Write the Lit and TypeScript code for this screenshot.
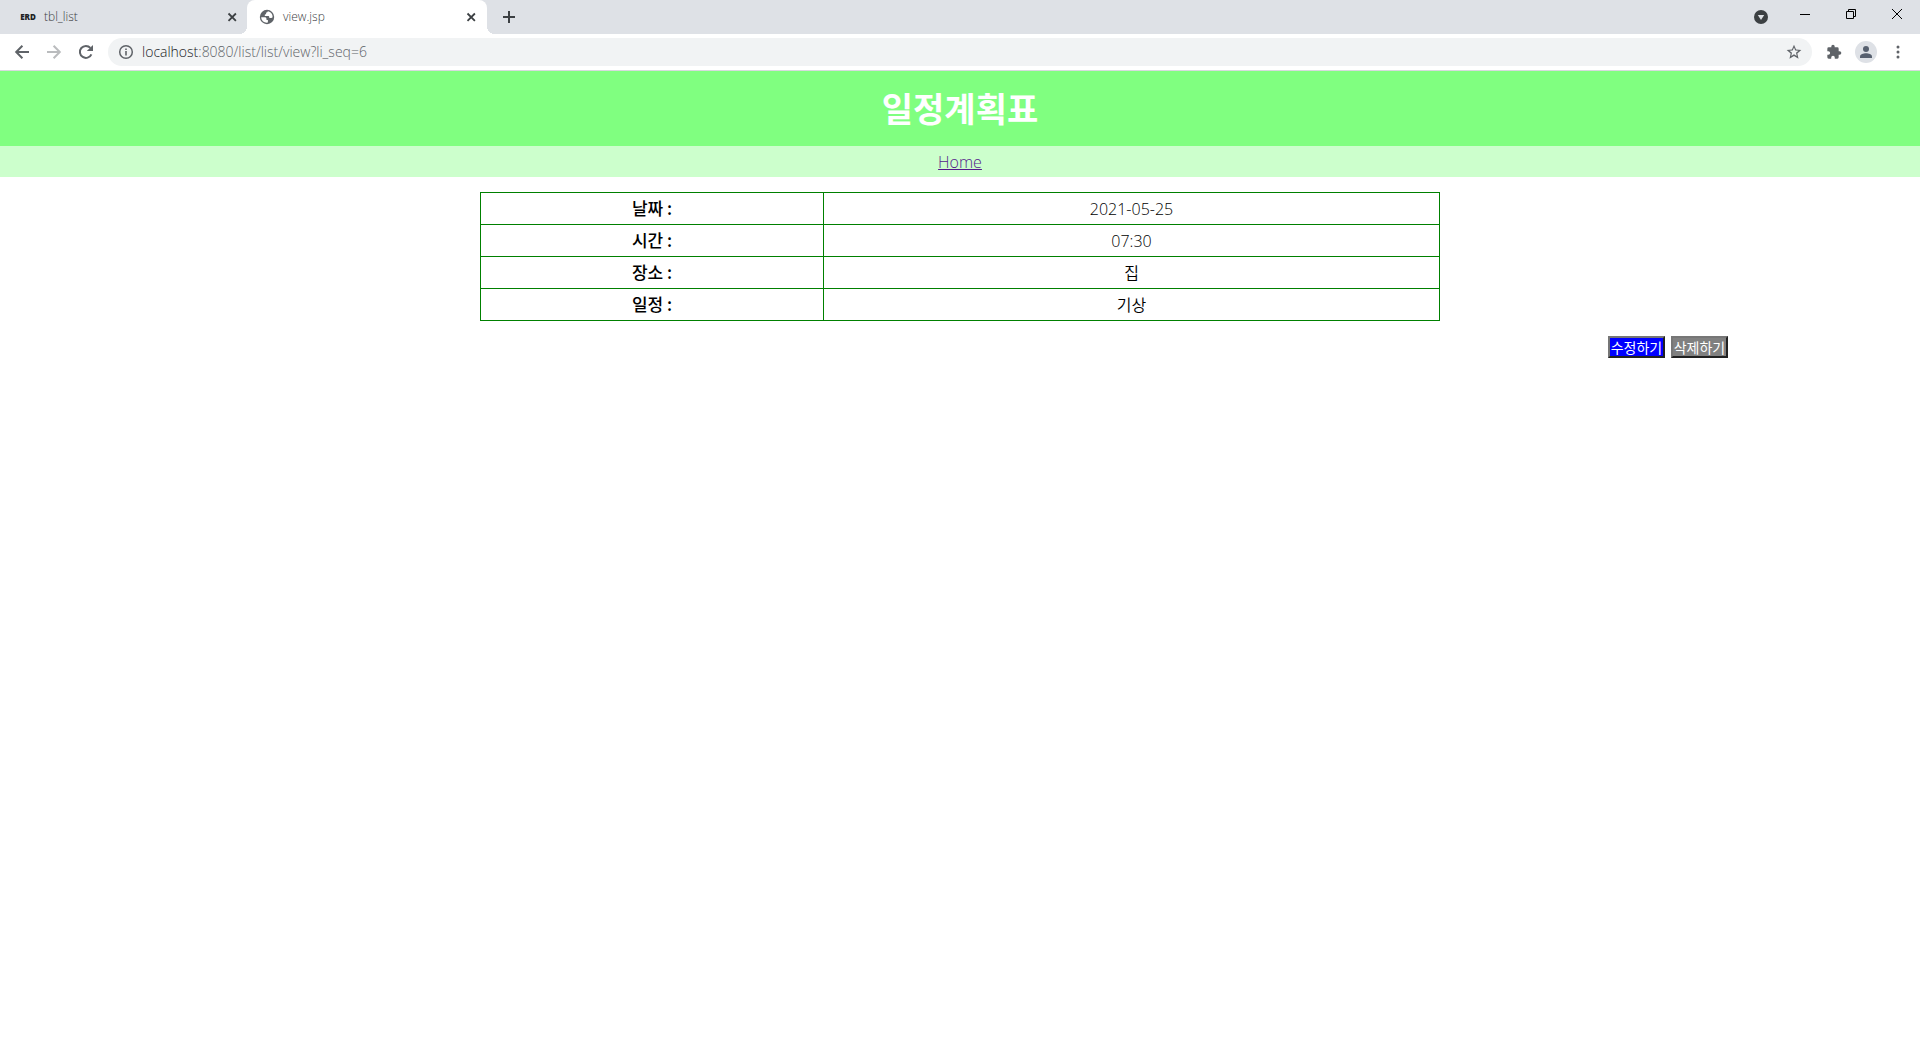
import { LitElement, html, css } from "lit";
import { customElement, property } from "lit/decorators.js";
import { classMap } from "lit/directives/class-map.js";

const closeIcon = html`<svg width="16" height="16" viewBox="0 0 16 16" fill="none" stroke="#3c4043" stroke-width="1.800"><path d="M4.500 4.500l7.400 7.400M11.900 4.500l-7.400 7.400" /></svg>`;

const globeIcon = html`<svg width="16" height="16" viewBox="0 0 16 16">
  <circle cx="8" cy="8" r="7.2" fill="#5f6368" />
  <path fill="#fff" d="M2.200 8.200h3.300c1.300 0 2 .7 2 1.700v1h1.400v2.700c-3.600.6-6.700-2-6.700-5.400zM8.800 2.300c-.1.900-.8 1.200-1.700 1.200v1.300c0 .6-.5.900-1.300.9v1.200h3.200c.8 0 1.300.5 1.300 1.300v.8h1.900c.6 0 1-.3 1.400-.8.3-3-2-5.600-4.800-5.900z" />
</svg>`;

@customElement("browser-tab")
export class BrowserTab extends LitElement {
  @property() label = "";
  @property() icon = "";
  @property({ type: Boolean }) active = false;

  static styles = css`
    :host { display: block; flex: 0 1 240px; min-width: 0; }
    .tab {
      display: flex; align-items: center; box-sizing: border-box; height: 34px;
      padding: 0 7px 0 13px; position: relative;
    }
    .active { background: #fff; border-radius: 8px 8px 0 0; padding: 0 8px 0 12px; }
    .active::before, .active::after {
      content: ""; position: absolute; bottom: 0; width: 8px; height: 8px;
    }
    .active::before { right: 100%; background: radial-gradient(circle at 0 0, transparent 8px, #fff 8px); }
    .active::after { left: 100%; background: radial-gradient(circle at 100% 0, transparent 8px, #fff 8px); }
    button { border: 0; background: none; padding: 0; margin: 0; font: inherit; color: inherit; display: flex; align-items: center; }
    .title { flex: 1; min-width: 0; gap: 8px; font-size: 12px; color: #3c4043; height: 28px; }
    .icon { width: 16px; display: flex; justify-content: center; }
    .erd { font: 800 8px/16px "Open Sans", sans-serif; color: #202124; }
    svg { display: block; }
  `;

  render() {
    return html`<div class=${classMap({ tab: true, active: this.active })}>
      <button class="title" role="tab" aria-selected=${this.active ? "true" : "false"}>
        <span class="icon">${this.icon ? html`<span class="erd">${this.icon}</span>` : globeIcon}</span>
        <span>${this.label}</span>
      </button>
      <button class="close" aria-label="Close tab">${closeIcon}</button>
    </div>`;
  }
}

@customElement("browser-chrome")
export class BrowserChrome extends LitElement {
  static styles = css`
    :host { display: block; font-family: "Open Sans", "Noto Sans CJK KR", sans-serif; font-weight: 360; }
    .strip { display: flex; align-items: flex-start; height: 34px; padding-left: 7px; background: #dee1e6; }
    button { border: 0; background: none; padding: 0; margin: 0; display: flex; align-items: center; justify-content: center; flex: none; }
    svg { display: block; }
    .add { width: 28px; height: 34px; margin-left: 8px; }
    .spacer { flex: 1; }
    .search { width: 42px; height: 34px; }
    .win { width: 46px; height: 28px; }
    .toolbar { display: flex; align-items: center; height: 36px; padding: 0 6px; border-bottom: 1px solid #d7dade; background: #fff; }
    .tool { width: 32px; height: 32px; }
    .omnibox { flex: 1; min-width: 0; display: flex; align-items: center; height: 28px; margin: 0 6px; padding: 0 8px; border-radius: 14px; background: #f1f3f4; font-size: 14px; box-sizing: border-box; }
    .info { width: 20px; margin-right: 6px; }
    .omnibox label { color: #202124; }
    .omnibox input { flex: 1; min-width: 0; border: 0; padding: 0; margin: 0; background: none; outline: none; font: inherit; color: #5f6368; }
    .star { width: 20px; }
    .avatar { width: 22px; height: 22px; border-radius: 50%; background: #dee1e6; display: flex; align-items: center; justify-content: center; }
  `;

  render() {
    return html`
      <div class="strip">
        <browser-tab label="tbl_list" icon="ERD"></browser-tab>
        <browser-tab label="view.jsp" active></browser-tab>
        <button class="add" aria-label="New tab">
          <svg width="14" height="14" viewBox="0 0 14 14" stroke="#3c4043" stroke-width="2"><path d="M7 1v12M1 7h12" /></svg>
        </button>
        <span class="spacer"></span>
        <button class="search" aria-label="Search tabs">
          <svg width="14" height="14" viewBox="0 0 14 14"><circle cx="7" cy="7" r="7" fill="#3c4043" /><path d="M3.800 5h6.400L7 10z" fill="#dee1e6" /></svg>
        </button>
        <button class="win" aria-label="Minimize">
          <svg width="10" height="10" viewBox="0 0 10 10"><path d="M0 5h10v1H0z" /></svg>
        </button>
        <button class="win" aria-label="Restore">
          <svg width="10" height="10" viewBox="0 0 10 10" fill="none" stroke="#000"><path d="M.5 2.500h7v7h-7zM2.500 2.500v-2h7v7h-2" /></svg>
        </button>
        <button class="win" aria-label="Close">
          <svg width="10" height="10" viewBox="0 0 10 10" stroke="#000"><path d="M0 0l10 10M10 0L0 10" /></svg>
        </button>
      </div>
      <div class="toolbar">
        <button class="tool" aria-label="Back">
          <svg width="16" height="16" viewBox="0 0 16 16" fill="none" stroke="#5f6368" stroke-width="2"><path d="M15 8H2.500M8.400 1.700L2.200 8l6.200 6.300" /></svg>
        </button>
        <button class="tool" aria-label="Forward">
          <svg width="16" height="16" viewBox="0 0 16 16" fill="none" stroke="#babcbe" stroke-width="2"><path d="M1 8h12.500M7.600 1.700L13.800 8l-6.200 6.300" /></svg>
        </button>
        <button class="tool" aria-label="Reload">
          <svg width="16" height="16" viewBox="0 0 16 16"><path d="M13.400 10.300A6 6 0 1 1 12.400 3.900" fill="none" stroke="#5f6368" stroke-width="2" /><path d="M15 .9v6.200H8.800z" fill="#5f6368" /></svg>
        </button>
        <div class="omnibox">
          <button class="info" aria-label="Site information">
            <svg width="16" height="16" viewBox="0 0 16 16" fill="none" stroke="#5f6368"><circle cx="8" cy="8" r="6.300" stroke-width="1.500" /><path d="M8 7v4.500M8 4.400v1.600" stroke-width="1.600" /></svg>
          </button>
          <label for="url">localhost</label><input id="url" type="text" value=":8080/list/list/view?li_seq=6" />
          <button class="star" aria-label="Bookmark">
            <svg width="16" height="16" viewBox="0 0 24 24" fill="#5f6368"><path d="M23 9.100l-7.900-.7L12 1 8.900 8.400 1 9.100l6 5.200L5.200 22 12 17.900 18.800 22 17 14.300zM12 15.500l-4.100 2.500L9 13.300 5.300 10.200l4.800-.4L12 5.300l1.900 4.500 4.800.4L15 13.300l1.100 4.700z" /></svg>
          </button>
        </div>
        <button class="tool" aria-label="Extensions">
          <svg width="16" height="16" viewBox="0 0 24 24" fill="#5f6368"><path d="M20.500 11H19V7a2 2 0 0 0-2-2h-4V3.500a2.500 2.500 0 0 0-5 0V5H4a2 2 0 0 0-2 2v3.800h1.500a2.700 2.700 0 0 1 0 5.400H2V20a2 2 0 0 0 2 2h3.800v-1.500a2.700 2.700 0 0 1 5.400 0V22H17a2 2 0 0 0 2-2v-4h1.500a2.500 2.500 0 0 0 0-5z" /></svg>
        </button>
        <button class="tool" aria-label="Profile">
          <span class="avatar"><svg width="12" height="12" viewBox="0 0 12 12" fill="#57606f"><circle cx="6" cy="3" r="3" /><path d="M0 12v-1.500C0 8.500 3.500 7.300 6 7.300s6 1.200 6 3.200V12z" /></svg></span>
        </button>
        <button class="tool" aria-label="Menu">
          <svg width="4" height="14" viewBox="0 0 4 14" fill="#5f6368"><circle cx="2" cy="2" r="1.500" /><circle cx="2" cy="7" r="1.500" /><circle cx="2" cy="12" r="1.500" /></svg>
        </button>
      </div>
    `;
  }
}

@customElement("app-root")
export class AppRoot extends LitElement {
  static styles = css`
    :host { display: block; min-height: 100vh; background: #fff; color: #000; font: 360 16px/24px "Open Sans", "Noto Sans CJK KR", sans-serif; }
    header { background: #80ff80; padding: 14px 0 15px; text-align: center; }
    h1 { margin: 0; color: #fff; font: 700 34px/46px "Noto Sans CJK KR", sans-serif; }
    nav { background: #ccffcc; padding: 4px 0 3px; text-align: center; }
    nav a { color: #551a8b; }
    table { width: 50%; margin: 15px auto; border-collapse: collapse; table-layout: fixed; text-align: center; }
    th, td { border: 1px solid #008000; padding: 3px 0 4px; }
    td { padding: 4px 0 3px; }
    th { width: 342px; font: 500 17px/24px "Noto Sans CJK KR", sans-serif; }
    .actions { display: flex; justify-content: flex-end; gap: 6px; width: 80%; margin: 0 auto; }
    .actions button { color: #fff; border: 2px solid; border-color: #767676 #212121 #212121 #767676; padding: 0; height: 22px; width: 57px; font: 14px/16px "Noto Sans CJK KR", sans-serif; white-space: nowrap; }
    .edit { background: #0000ff; }
    .remove { background: #808080; }
  `;

  private rows = [
    ["날짜 :", "2021-05-25"],
    ["시간 :", "07:30"],
    ["장소 :", "집"],
    ["일정 :", "기상"],
  ];

  render() {
    return html`
      <browser-chrome></browser-chrome>
      <header><h1>일정계획표</h1></header>
      <nav><a href="#">Home</a></nav>
      <main>
        <table>
          <tbody>
            ${this.rows.map(([name, value]) => html`<tr><th scope="row">${name}</th><td>${value}</td></tr>`)}
          </tbody>
        </table>
        <div class="actions">
          <button class="edit">수정하기</button>
          <button class="remove">삭제하기</button>
        </div>
      </main>
    `;
  }
}
